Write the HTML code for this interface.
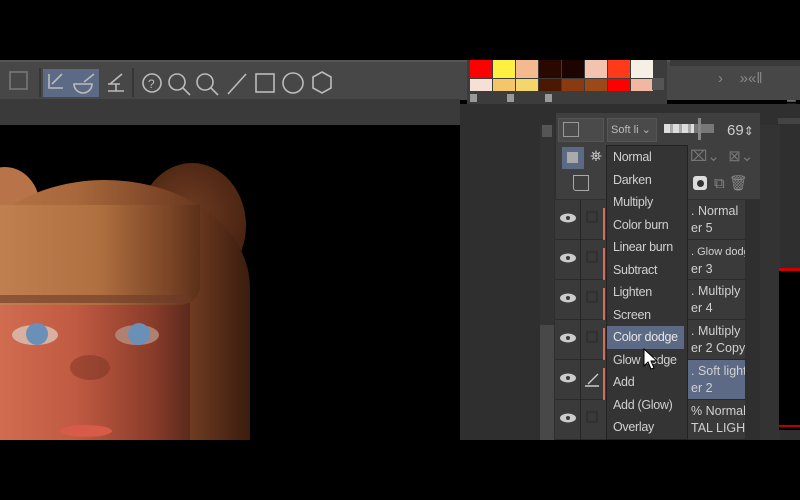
<!DOCTYPE html>
<html><head><meta charset="utf-8"><style>
*{margin:0;padding:0;box-sizing:border-box}
html,body{width:800px;height:500px;overflow:hidden}
body{background:#000;position:relative;font-family:"Liberation Sans",sans-serif}
.a{position:absolute}
.menu div{height:22.5px;line-height:22.5px;padding-left:6px;color:#d0d0d0;font-size:12.5px;letter-spacing:-0.3px;white-space:nowrap}
.row{position:absolute;left:555px;width:190px;height:40px;border-bottom:1px solid #2a2a2a;background:#3a3a3a;overflow:hidden}
.row .t{position:absolute;left:136px;color:#d0d0d0;font-size:12.5px;line-height:17px;top:3px;white-space:nowrap}
</style></head><body>
<!-- toolbar -->
<div class="a" style="left:0;top:60px;width:800px;height:40px;background:#474747;border-top:2px solid #555"></div>
<div class="a" style="left:0;top:99px;width:460px;height:26px;background:#3a3a3a"></div>
<div class="a" style="left:43px;top:69px;width:56px;height:28px;background:#5c6a85"></div>
<svg class="a" style="left:0;top:60px" width="460" height="40" fill="none" stroke="#bbb" stroke-width="1.6">
<rect x="10" y="12" width="17" height="17" stroke="#777"/>
<line x1="40" y1="8" x2="40" y2="37" stroke="#333"/>
<path d="M49 14v14h14M52 24l10-10"/><path d="M74 24a9 9 0 0 0 18 0zM84 22l10-8"/>
<path d="M108 31h16M108 24h12M110 24l12-10M116 24v7"/>
<line x1="133" y1="8" x2="133" y2="37" stroke="#333"/>
<circle cx="152" cy="23" r="9"/><text x="148" y="28" fill="#bbb" stroke="none" font-size="12" font-family="Liberation Sans">?</text>
<circle cx="177" cy="22" r="8"/><path d="M183 28l7 7"/><circle cx="205" cy="22" r="8"/><path d="M211 28l7 7"/>
<path d="M228 34l18-20"/><rect x="256" y="14" width="18" height="18"/><circle cx="293" cy="23" r="10"/>
<path d="M322 12l9 5v11l-9 5-9-5V17z"/></svg>
<!-- palette -->
<div class="a" style="left:467px;top:60px;width:200px;height:44px;background:#3c3c3c"></div>
<div class="a" style="left:470px;top:60px;display:grid;grid-template-columns:repeat(8,22px);grid-template-rows:18px 12px;gap:1px">
<div style="background:#f00"></div><div style="background:#ffef40"></div><div style="background:#f5b98f"></div><div style="background:#2a0800"></div><div style="background:#1c0400"></div><div style="background:#f2c4b0"></div><div style="background:#ff3a1a"></div><div style="background:#f5efe4"></div>
<div style="background:#f5e0d6"></div><div style="background:#f5c56a"></div><div style="background:#f5d66a"></div><div style="background:#4a1800"></div><div style="background:#8a3a10"></div><div style="background:#9a4a18"></div><div style="background:#f00"></div><div style="background:#f0b8a0"></div></div>
<div class="a" style="left:652px;top:78px;width:12px;height:12px;background:#555"></div>
<div class="a" style="left:470px;top:94px;width:7px;height:8px;background:#999"></div>
<div class="a" style="left:507px;top:94px;width:7px;height:8px;background:#999"></div>
<div class="a" style="left:545px;top:94px;width:7px;height:8px;background:#999"></div>
<div class="a" style="left:670px;top:60px;width:130px;height:6px;background:#3a3a3a"></div>
<div class="a" style="left:718px;top:70px;color:#888;font-size:15px">›&nbsp;&nbsp;&nbsp;&nbsp;»«‖</div>
<div class="a" style="left:786px;top:98px;color:#aaa;font-size:12px">☰</div>
<!-- right panel -->
<div class="a" style="left:460px;top:104px;width:340px;height:336px;background:#2f2f2f"></div>
<div class="a" style="left:778px;top:118px;width:22px;height:6px;background:#444"></div>
<div class="a" style="left:540px;top:125px;width:14px;height:315px;background:#333"></div>
<div class="a" style="left:542px;top:125px;width:10px;height:12px;background:#555"></div>
<div class="a" style="left:540px;top:325px;width:14px;height:115px;background:#484848"></div>
<div class="a" style="left:556px;top:113px;width:204px;height:86px;background:#3f3f3f"></div>
<div class="a" style="left:558px;top:118px;width:46px;height:24px;background:#4a4a4a;border:1px solid #555"></div>
<div class="a" style="left:563px;top:122px;width:16px;height:15px;border:1.5px solid #999"></div>
<div class="a" style="left:607px;top:118px;width:50px;height:24px;background:#4a4a4a;border:1px solid #555;color:#bbb;font-size:11px;padding:4px 3px">Soft li ⌄</div>
<div class="a" style="left:664px;top:124px;width:30px;height:9px;background:repeating-linear-gradient(90deg,#ddd 0 6px,#aaa 6px 9px)"></div>
<div class="a" style="left:694px;top:124px;width:20px;height:9px;background:#777"></div>
<div class="a" style="left:698px;top:118px;width:3px;height:22px;background:#888"></div>
<div class="a" style="left:727px;top:122px;color:#ccc;font-size:15px">69<span style="font-size:12px">⇕</span></div>
<div class="a" style="left:562px;top:147px;width:22px;height:22px;background:#5c6a85"></div>
<div class="a" style="left:567px;top:152px;width:11px;height:11px;background:#aaa"></div>
<div class="a" style="left:590px;top:148px;color:#ccc;font-size:15px">⛯</div>
<div class="a" style="left:690px;top:147px;color:#777;font-size:15px">⌧⌄&nbsp;&nbsp;⊠⌄</div>
<div class="a" style="left:573px;top:175px;width:16px;height:16px;border:1.5px solid #aaa;border-radius:0 0 0 3px"></div>
<div class="a" style="left:693px;top:176px;width:14px;height:14px;background:#ddd;border-radius:3px"></div>
<div class="a" style="left:697px;top:180px;width:7px;height:7px;background:#333;border-radius:50%"></div>
<div class="a" style="left:714px;top:174px;color:#888;font-size:15px">⧉&nbsp;🗑</div>
<!-- layers -->
<div class="row" style="top:200px"><div class="t">. Normal<br>er 5</div></div>
<div class="row" style="top:240px"><div class="t"><span style="font-size:11px">. Glow dodg</span><br>er 3</div></div>
<div class="row" style="top:280px"><div class="t">. Multiply<br>er 4</div></div>
<div class="row" style="top:320px"><div class="t">. Multiply<br>er 2 Copy</div></div>
<div class="row" style="top:360px"><div class="a" style="left:130px;top:0;width:60px;height:40px;background:#5c6a85"></div><div class="t">. Soft light<br>er 2</div></div>
<div class="row" style="top:400px;height:40px"><div class="t">% Normal<br>TAL LIGHT</div></div>
<div class="a" style="left:580px;top:200px;width:1px;height:240px;background:#262626"></div>
<svg class="a" style="left:555px;top:200px" width="50" height="240">
<g fill="#ccc"><ellipse cx="13" cy="18" rx="8" ry="4.5"/><ellipse cx="13" cy="58" rx="8" ry="4.5"/><ellipse cx="13" cy="98" rx="8" ry="4.5"/><ellipse cx="13" cy="138" rx="8" ry="4.5"/><ellipse cx="13" cy="178" rx="8" ry="4.5"/><ellipse cx="13" cy="218" rx="8" ry="4.5"/></g>
<g fill="#3a3a3a"><circle cx="13" cy="18" r="2"/><circle cx="13" cy="58" r="2"/><circle cx="13" cy="98" r="2"/><circle cx="13" cy="138" r="2"/><circle cx="13" cy="178" r="2"/><circle cx="13" cy="218" r="2"/></g>
<g fill="none" stroke="#2e2e2e" stroke-width="1.5"><rect x="32" y="12" width="10" height="10"/><rect x="32" y="52" width="10" height="10"/><rect x="32" y="92" width="10" height="10"/><rect x="32" y="132" width="10" height="10"/><rect x="32" y="212" width="10" height="10"/></g>
<path d="M30 186h14M33 184l10-10" stroke="#ccc" stroke-width="1.4"/>
<g fill="#d0705a"><rect x="48" y="8" width="3" height="32"/><rect x="48" y="48" width="3" height="32"/><rect x="48" y="88" width="3" height="32"/><rect x="48" y="128" width="3" height="32"/><rect x="48" y="168" width="3" height="32"/></g></svg>
<div class="a" style="left:760px;top:125px;width:20px;height:315px;background:#333"></div>
<div class="a" style="left:779px;top:268px;width:21px;height:162px;background:#000;border-top:3px solid #c00"></div>
<div class="a" style="left:779px;top:425px;width:21px;height:2px;background:#b00"></div>
<!-- menu -->
<div class="a menu" style="left:606px;top:145px;width:82px;height:295px;background:#343434;border:1px solid #222;overflow:hidden">
<div>Normal</div><div>Darken</div><div>Multiply</div><div>Color burn</div><div>Linear burn</div><div>Subtract</div><div>Lighten</div><div>Screen</div><div style="background:#5c6a85;margin-right:3px;color:#e6e6e6">Color dodge</div><div>Glow dodge</div><div>Add</div><div>Add (Glow)</div><div>Overlay</div></div>
<svg class="a" style="left:643px;top:348px" width="16" height="24"><path d="M1 1v17l4-4 3 7 3-1-3-7h6z" fill="#fff" stroke="#000"/></svg>
<!-- canvas art -->
<div class="a" style="left:0;top:125px;width:458px;height:315px;background:#000;overflow:hidden">
<div class="a" style="left:138px;top:38px;width:108px;height:125px;border-radius:50%;background:radial-gradient(circle at 45% 40%,#6e3c22,#45200f 75%)"></div>
<div class="a" style="left:-30px;top:42px;width:70px;height:80px;border-radius:50%;background:#b87448"></div>
<div class="a" style="left:-40px;top:55px;width:290px;height:360px;border-radius:50% 50% 10% 10%/30% 30% 10% 10%;background:linear-gradient(90deg,#b87848 0%,#a8683c 40%,#6e3a20 80%,#3a1c0e 100%)"></div>
<div class="a" style="left:0;top:175px;width:190px;height:150px;background:linear-gradient(90deg,#d06c50 0%,#c05a42 40%,#8a3c2a 80%,#5a2a1c 100%)"></div>
<div class="a" style="left:0;top:80px;width:200px;height:100px;border-radius:0 0 20px 0;background:linear-gradient(90deg,#c08050,#b07040 50%,#7a4426 85%,#5a3018);opacity:.95"></div>
<div class="a" style="left:0;top:170px;width:190px;height:8px;background:#6a3a2a;opacity:.6"></div>
<div class="a" style="left:12px;top:200px;width:46px;height:20px;border-radius:50%;background:#d8b0a0"></div>
<div class="a" style="left:26px;top:198px;width:22px;height:22px;border-radius:50%;background:#6a90b8"></div>
<div class="a" style="left:115px;top:200px;width:44px;height:20px;border-radius:50%;background:#b08070"></div>
<div class="a" style="left:128px;top:198px;width:22px;height:22px;border-radius:50%;background:#6a90b8"></div>
<div class="a" style="left:70px;top:230px;width:40px;height:25px;border-radius:50%;background:#7a3426;opacity:.5"></div>
<div class="a" style="left:60px;top:300px;width:52px;height:12px;border-radius:50%;background:#d85a48"></div>
</div>
</body></html>
